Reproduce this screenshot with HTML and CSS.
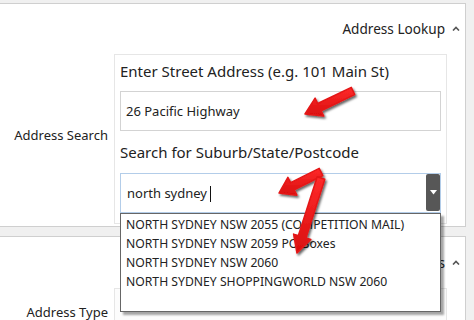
FILE: index.html
```html
<!DOCTYPE html>
<html lang="en">
<head>
  <meta charset="UTF-8" />
  <meta name="viewport" content="width=device-width, initial-scale=1.0"/>
  <title>Address Lookup</title>
  <link rel="stylesheet" href="styles.css">
</head>
<body>

  <div class="page">
    <section class="panel lookup">
      <div class="panel-head">
        <span>Address Lookup</span>
        <svg class="chevron" width="8" height="5" viewBox="0 0 8 5"><polyline points="1,4.5 4,1.5 7,4.5" fill="none" stroke="#555" stroke-width="1.6"/></svg>
      </div>
      <div class="row">
        <div class="row-label search-label">Address Search</div>
        <div class="field-box">
          <div class="field-label">Enter Street Address (e.g. 101 Main St)</div>
          <div class="text-input">26 Pacific Highway</div>
          <div class="field-label second">Search for Suburb/State/Postcode</div>
          <div class="combo">
            <span class="combo-text">north sydney<span class="caret"></span></span>
            <span class="combo-btn">
              <svg width="7" height="5" viewBox="0 0 7 5"><polygon points="0,0 7,0 3.5,4.5" fill="#fff"/></svg>
            </span>
            <ul class="suggest">
              <li>NORTH SYDNEY NSW 2055 (COMPETITION MAIL)</li>
              <li>NORTH SYDNEY NSW 2059 PO Boxes</li>
              <li>NORTH SYDNEY NSW 2060</li>
              <li>NORTH SYDNEY SHOPPINGWORLD NSW 2060</li>
            </ul>
          </div>
        </div>
      </div>
    </section>

    <section class="panel details">
      <div class="panel-head">
        <span>Address Details</span>
        <svg class="chevron" width="8" height="5" viewBox="0 0 8 5"><polyline points="1,4.5 4,1.5 7,4.5" fill="none" stroke="#555" stroke-width="1.6"/></svg>
      </div>
      <div class="row">
        <div class="row-label type-label">Address Type</div>
        <div class="field-box type-box"></div>
      </div>
    </section>

    <!-- red callout arrows drawn over the form -->
    <svg class="arrows" width="474" height="320" viewBox="0 0 474 320">
      <defs>
        <filter id="shade" x="-20%" y="-20%" width="140%" height="140%">
          <feDropShadow dx="1.5" dy="2" stdDeviation="1.3" flood-color="#000" flood-opacity="0.6"/>
        </filter>
        <linearGradient id="red" x1="0" y1="0" x2="0" y2="1">
          <stop offset="0" stop-color="#ff2a2a"/>
          <stop offset="1" stop-color="#d90f0f"/>
        </linearGradient>
      </defs>
      <g filter="url(#shade)" fill="url(#red)" stroke="#e41616" stroke-width="1.5" stroke-linejoin="round">
        <polygon points="354.7,94.6 321.1,110.7 323.7,116.1 305,114 315.1,98.1 317.7,103.5 351.3,87.4"/>
        <polygon points="322.8,175.6 294.2,189.9 296.9,195.2 279,193 287.9,177.4 290.6,182.7 319.2,168.4"/>
        <polygon points="324.8,179.2 306,238 310.8,239.5 297,253 293.6,234.1 298.4,235.6 317.2,176.8"/>
      </g>
    </svg>
  </div>

</body>
</html>
```

FILE: styles.css
```css
* {
  box-sizing: border-box;
}
body {
  margin: 0;
  background: #f0f0f0;
  font-family: 'Noto Sans', 'Open Sans', sans-serif;
  color: #222;
}
.page {
  position: relative;
  width: 474px;
  height: 320px;
  overflow: hidden;
  padding-top: 3px;
}
.panel {
  width: 466px;
  background: #fff;
  border: 1px solid #cfcfcf;
  border-left: none;
}
.lookup {
  padding-bottom: 2px;
}
.details {
  margin-top: 9px;
  height: 100px;
}
.panel-head {
  display: flex;
  justify-content: flex-end;
  align-items: center;
  gap: 7px;
  padding: 15px 5px 15px 0;
  font-size: 13.6px;
  line-height: 20px;
}
.details .panel-head {
  padding-top: 16px;
}
.chevron {
  margin-top: -2px;
}
.row {
  display: flex;
  margin-right: 18px;
}
.row-label {
  width: 114px;
  padding-right: 6px;
  text-align: right;
  font-size: 13px;
  line-height: 20px;
}
.search-label {
  align-self: center;
  margin-bottom: 8px;
}
.type-label {
  padding-top: 14px;
}
.field-box {
  flex: 1;
  border: 1px solid #e6e6e6;
  padding: 6px 5px 10px 5px;
}
.type-box {
  height: 44px;
  background: #fcfcfc;
}
.field-label {
  font-size: 15px;
  line-height: 20px;
}
.field-label.second {
  margin-top: 11px;
}
.text-input {
  margin-top: 10px;
  height: 40px;
  border: 1px solid #d3d3d3;
  padding-left: 5px;
  font-size: 13px;
  line-height: 38px;
}
.combo {
  position: relative;
  display: flex;
  margin-top: 11px;
  height: 40px;
  border: 1px solid #b3cde9;
}
.combo-text {
  flex: 1;
  padding-left: 6px;
  font-size: 13px;
  line-height: 38px;
}
.caret {
  display: inline-block;
  width: 1px;
  height: 16px;
  margin-left: 3px;
  background: #111;
  vertical-align: -4px;
}
.combo-btn {
  width: 14px;
  margin-bottom: 1px;
  background: #575757;
  border-radius: 2px;
  display: flex;
  align-items: center;
  justify-content: center;
}
.suggest {
  position: absolute;
  left: -1px;
  top: 39px;
  width: 321px;
  height: 99px;
  margin: 0;
  padding: 1px 0 0 0;
  list-style: none;
  background: #fff;
  border: 1px solid #666;
  box-shadow: 3px 3px 2px rgba(0,0,0,0.35);
  z-index: 2;
}
.suggest li {
  padding-left: 5px;
  font-size: 12.2px;
  line-height: 19px;
  white-space: nowrap;
}
.arrows {
  position: absolute;
  top: 0;
  left: 0;
  z-index: 3;
  pointer-events: none;
}
```
